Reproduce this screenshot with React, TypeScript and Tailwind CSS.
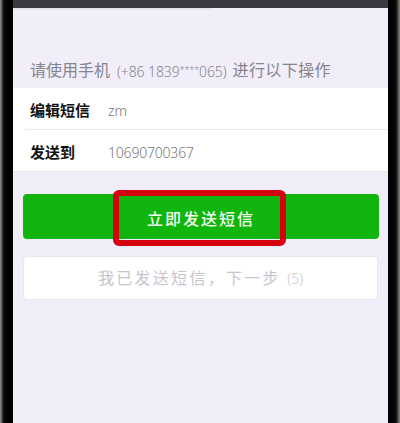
const cjk = "font-['Noto_Sans','Noto_Sans_CJK_SC',sans-serif]";

export default function App() {
  return (
    <div className={`w-[400px] h-[423px] overflow-hidden flex bg-black ${cjk}`}>
      <div className="w-[13px] shrink-0 bg-gradient-to-r from-[#9a9a9a] via-[#0a0a0a] via-30% to-[#000000]" />
      <div className="w-[375px] shrink-0 flex flex-col bg-[#f2eef9]">
        <div className="h-[8px] shrink-0 bg-[#3a3a42]" />
        <div className="h-[2px] w-[199px] shrink-0 bg-[#e4e2ea]" />
        <p className="mt-[50px] h-[28px] pl-[17px] text-[16px] leading-[20px] text-[#85838f] whitespace-nowrap flex items-start">
          <span>请使用手机</span>
          <span className="ml-[7px] mr-[6px] text-[14px] font-light tracking-[-0.1px]">
            (+86 1839<span className="text-[9px] align-[4px]">****</span>065)
          </span>
          <span className="tracking-[0.4px]">进行以下操作</span>
        </p>
        <div className="bg-white shrink-0 pl-[12px] border-b border-[#e6e4ea]">
          <div className="h-[42px] pt-[3px] flex items-center border-b border-[#ececec]">
            <span className="w-[83px] pl-[5px] text-[15px] font-bold text-[#111111]">编辑短信</span>
            <span className="text-[14px] font-light text-[#777777]">zm</span>
          </div>
          <div className="h-[41px] pt-[3px] flex items-center">
            <span className="w-[83px] pl-[5px] text-[15px] font-bold text-[#111111]">发送到</span>
            <span className="text-[14px] font-light text-[#777777] tracking-[-0.2px]">10690700367</span>
          </div>
        </div>
        <div className="relative mt-[22px] ml-[10px] mr-[9px] h-[45px] shrink-0 rounded-[4px] bg-[#10b50e] flex items-center justify-center">
          <span className="pt-[4px] text-[16px] font-medium text-[#f4fff0] tracking-[2px]">立即发送短信</span>
          <div className="absolute left-[90px] top-[-4px] w-[173px] h-[56px] rounded-[6px] border-[6px] border-[#d3020e]" />
        </div>
        <div className="mt-[17px] mx-[10px] h-[44px] shrink-0 rounded-[4px] bg-white border border-[#eae7f0] flex items-center justify-center">
          <span className="text-[16px] text-[#c6c5cd] tracking-[2.3px]">我已发送短信，下一步 <span className="text-[14px] font-light tracking-normal">(5)</span></span>
        </div>
      </div>
      <div className="flex-1 bg-gradient-to-r from-[#000000] via-[#0a0a0a] via-65% to-[#8a8a8a]" />
    </div>
  );
}
